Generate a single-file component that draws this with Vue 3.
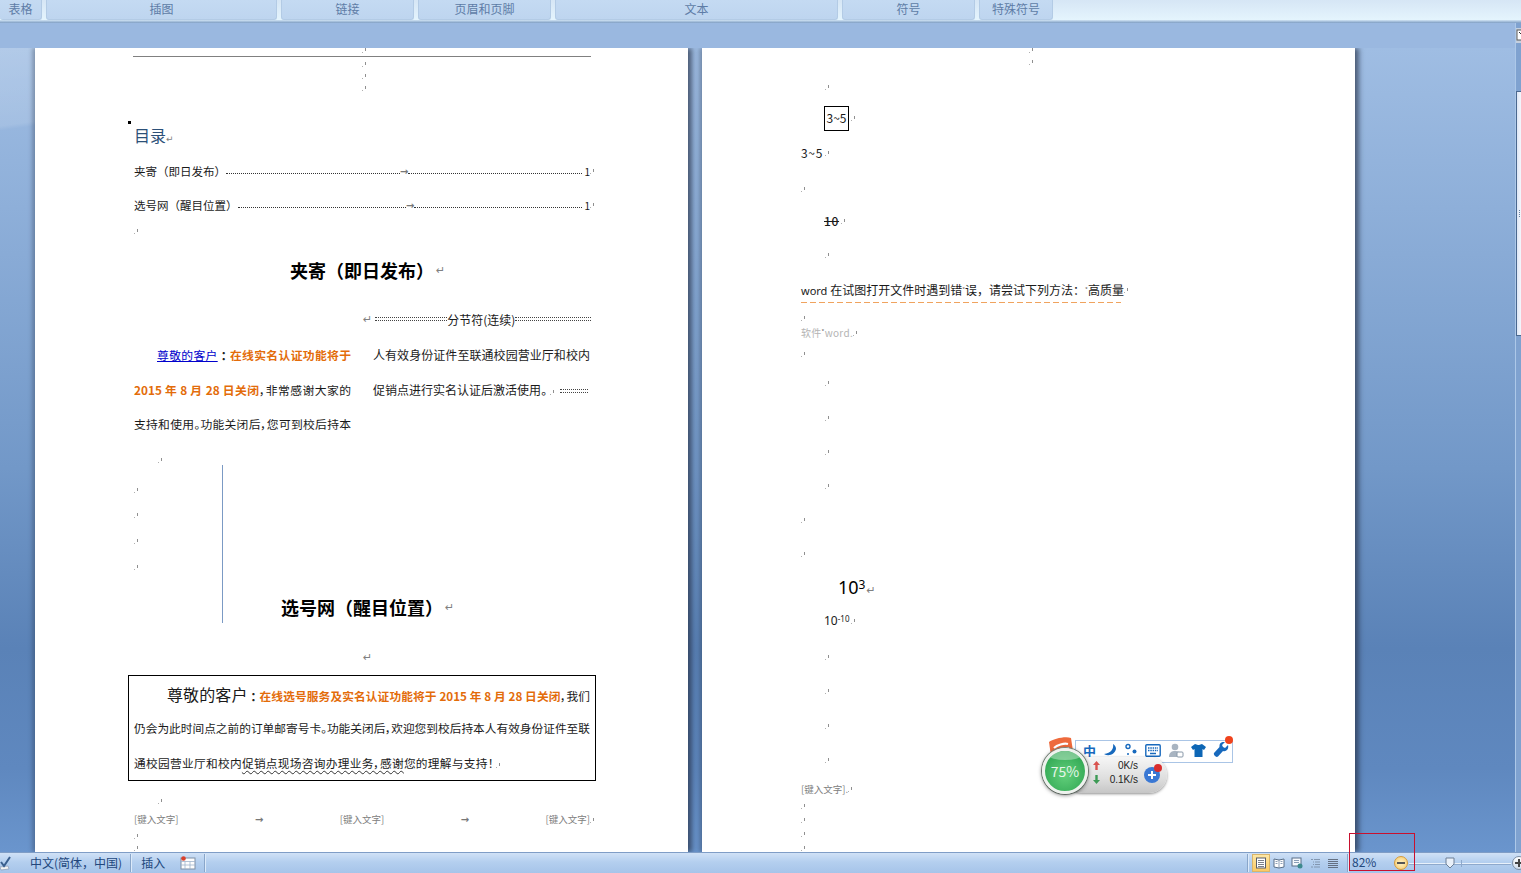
<script setup>
const tabs = [
  { t: '表格', w: 42 }, { t: '插图', w: 231 }, { t: '链接', w: 133 }, { t: '页眉和页脚', w: 133 },
  { t: '文本', w: 283 }, { t: '符号', w: 133 }, { t: '特殊符号', w: 74 }
]
const raw = [
  [50, 228, 'mark'], [62, 228, 'mark'], [87, 24, 'mark'], [118.5, 23, 'box'], [153, 0, 'range'], [189, 0, 'mark'],
  [221, 23, 'strike'], [255, 24, 'mark'], [290, 0, 'word'], [302, -1, 'dash'], [318, 0, 'mark'], [333, 0, 'soft'],
  [354, 0, 'mark'], [383, 24, 'mark'], [418, 24, 'mark'], [452, 24, 'mark'], [486, 24, 'mark'], [520, 0, 'mark'],
  [554, 0, 'mark'], [587, 37, 'pow'], [621, 23, 'neg'], [657, 24, 'mark'], [691, 24, 'mark'], [726, 24, 'mark'],
  [760, 24, 'mark'], [789, 0, 'hdr'], [806, 0, 'mark'], [820, 0, 'mark'], [834, 0, 'mark'], [848, 0, 'mark']
]
const rows = raw.map((r, i) => ({
  kind: r[2],
  indent: r[1],
  gap: i + 1 < raw.length ? raw[i + 1][0] - r[0] : 16
}))
const views = [0, 1, 2, 3, 4]
</script>

<template>
  <div class="app">
    <header class="ribbon">
      <div v-for="tab in tabs" :key="tab.t" class="tab" :style="{ width: tab.w + 'px' }">{{ tab.t }}</div>
    </header>

    <div class="middle">
      <div class="main">
        <div class="ruler"></div>
        <div class="workspace">
          <article class="page left">
            <div class="m-row h4 center-mark"><i class="mk"></i></div>
            <div class="rule"></div>
            <div class="m-row h8 center-mark"><i class="mk"></i></div>
            <div class="m-row h16 center-mark"><i class="mk"></i></div>
            <div class="m-row h8 center-mark"><i class="mk"></i></div>

            <div class="toc-head"><b class="anchor"></b>目录<span class="ret">↵</span></div>
            <div class="toc first">
              <span>夹寄（即日发布）</span><em class="lead"></em><span class="tab-arrow">→</span><em class="lead r1"></em><span class="num">1</span><i class="mk"></i>
            </div>
            <div class="toc">
              <span>选号网（醒目位置）</span><em class="lead"></em><span class="tab-arrow">→</span><em class="lead r2"></em><span class="num">1</span><i class="mk"></i>
            </div>
            <div class="m-row h19"><i class="mk"></i></div>

            <h2 class="title t1">夹寄（即日发布）<span class="ret">↵</span></h2>

            <div class="section">
              <span class="ret">↵</span>
              <em class="dbl d1"></em><span>分节符(连续)</span><em class="dbl d2"></em>
            </div>

            <div class="cols">
              <div class="col">
                <p class="line just first-line"><a class="link">尊敬的客户</a><b class="dark">：</b><b class="org">在线实名认证功能将于</b></p>
                <p class="line just"><b class="org">2015 年 8 月 28 日关闭</b>，非常感谢大家的</p>
                <p class="line just">支持和使用。功能关闭后，您可到校后持本</p>
              </div>
              <div class="col">
                <p class="line just">人有效身份证件至联通校园营业厅和校内</p>
                <p class="line">促销点进行实名认证后激活使用。<i class="mk ml3"></i><em class="dbl d3"></em></p>
              </div>
            </div>

            <div class="drawing">
              <span class="v-line"></span>
              <div class="m-row h38 in26"><i class="mk"></i></div>
              <div class="m-row h22"><i class="mk"></i></div>
              <div class="m-row h28"><i class="mk"></i></div>
              <div class="m-row h24"><i class="mk"></i></div>
              <div class="m-row h28"><i class="mk"></i></div>
              <div class="spacer2"></div>
              <h2 class="title t2">选号网（醒目位置）<span class="ret">↵</span></h2>
              <div class="m-row h42 pad6 in228"><span class="ret">↵</span></div>
            </div>

            <div class="box">
              <p class="bline just box-first"><span class="big">尊敬的客户</span><b class="dark">：</b><b class="org">在线选号服务及实名认证功能将于 2015 年 8 月 28 日关闭</b>，我们</p>
              <p class="bline just b2">仍会为此时间点之前的订单邮寄号卡。功能关闭后，欢迎您到校后持本人有效身份证件至联</p>
              <p class="bline b3">通校园营业厅和校内<span class="wavy">促销点现场咨询办理业务，感谢</span>您的理解与支持！<i class="mk ml2"></i></p>
            </div>

            <div class="m-row h20 mt10 in26"><i class="mk"></i></div>
            <div class="hdr-row">
              <span>[键入文字]</span><span class="tab-arrow">→</span>
              <span>[键入文字]</span><span class="tab-arrow">→</span>
              <span>[键入文字]<i class="mk"></i></span>
            </div>
            <div class="m-row h18"><i class="mk"></i></div>
            <div class="m-row h6"><i class="mk"></i></div>
          </article>

          <article class="page right">
            <div class="first-gap"></div>
            <div v-for="(r, i) in rows" :key="i" class="r-row" :style="{ height: r.gap + 'px', paddingLeft: r.indent + 'px' }">
              <div class="cell">
                <i v-if="r.kind === 'mark'" class="mk"></i>
                <template v-else-if="r.kind === 'box'"><span class="range-box">3~5</span><i class="mk ml2"></i></template>
                <template v-else-if="r.kind === 'range'"><span class="t12 wide">3~5</span><i class="mk ml2"></i></template>
                <template v-else-if="r.kind === 'strike'"><s class="t12 wide b">10</s><i class="mk ml2"></i></template>
                <template v-else-if="r.kind === 'word'"><span class="t12 word"><span class="latin">word </span>在试图打开文件时遇到错<sup class="tick">*</sup>误，请尝试下列方法：<sup class="tick">*</sup>高质量</span><i class="mk"></i></template>
                <span v-else-if="r.kind === 'dash'" class="dash"></span>
                <template v-else-if="r.kind === 'soft'"><span class="soft">软件<sup class="tick">*</sup>word.</span><i class="mk"></i></template>
                <span v-else-if="r.kind === 'pow'" class="pow">10<sup>3</sup><span class="ret">↵</span></span>
                <template v-else-if="r.kind === 'neg'"><span class="neg">10<sup>-10</sup></span><i class="mk ml2"></i></template>
                <template v-else-if="r.kind === 'hdr'"><span class="hdr">[键入文字].</span><i class="mk"></i></template>
              </div>
            </div>
          </article>
        </div>
      </div>

      <aside class="scroll">
        <div class="scroll-btn">
          <svg width="6" height="14" viewBox="0 0 6 14"><rect x="1" y="2" width="8" height="10" fill="#fff" stroke="#5a5a5a"/><path d="M3 4l3 3" stroke="#333"/></svg>
        </div>
        <div class="thumb"><span class="grip"></span></div>
      </aside>
    </div>

    <footer class="status">
      <svg class="check" width="14" height="16" viewBox="0 0 14 16">
        <path d="M1 12l8-1 1 3-8 1z" fill="#f4f4f4" stroke="#8b9bb4" stroke-width=".7"/>
        <path d="M2 7l3 4 6-9" fill="none" stroke="#3a5f8e" stroke-width="2"/>
      </svg>
      <span class="st-lang">中文(简体，中国)</span>
      <span class="sep sp1"></span>
      <span class="st-ins">插入</span>
      <svg class="st-ico" width="16" height="14" viewBox="0 0 16 14">
        <rect x="1" y="2" width="14" height="11" fill="#fdfdfd" stroke="#7f8fa5"/>
        <path d="M1 5.500h14M5 5.500v7.500M10 5.500v7.500M1 9h14" stroke="#9fb4cc" stroke-width=".8"/>
        <circle cx="3.500" cy="2.500" r="2.300" fill="#d8402c"/>
      </svg>
      <span class="sep sp1"></span>
      <div class="st-right">
        <span class="sep"></span>
        <div class="views">
          <span v-for="v in views" :key="v" class="view" :class="{ active: v === 0 }">
            <svg width="12" height="12" viewBox="0 0 12 12">
              <template v-if="v === 0"><rect x="1.500" y="1" width="9" height="10" fill="#fff" stroke="#5a5f6a"/><path d="M3 3.500h6M3 5.500h6M3 7.500h6M3 9.500h6" stroke="#5a5f6a" stroke-width=".8"/></template>
              <template v-else-if="v === 1"><path d="M1 2l5 1 5-1v8l-5 1-5-1z" fill="#fff" stroke="#5a6f88"/><path d="M6 3v8M2.500 4.500h2M2.500 6.500h2M7.500 4.500h2M7.500 6.500h2" stroke="#6f86a5" stroke-width=".8"/></template>
              <template v-else-if="v === 2"><rect x="1" y="1" width="9" height="8" fill="#f6f9fd" stroke="#5a6f88"/><path d="M3 3.500h5M3 5.500h5" stroke="#6f86a5" stroke-width=".8"/><circle cx="9" cy="9" r="2.500" fill="#3d8a8e"/></template>
              <template v-else-if="v === 3"><path d="M2 2.500h2M5 2.500h6M4 5h1M6 5h5M4 7.500h1M6 7.500h5M2 10h2M5 10h6" stroke="#7d90a8" stroke-width=".9"/></template>
              <template v-else><path d="M1 2.500h10M1 4.500h10M1 6.500h10M1 8.500h10M1 10.500h10" stroke="#5a6475" stroke-width=".9"/></template>
            </svg>
          </span>
        </div>
        <span class="sep"></span>
        <span class="zoom-val">82%</span>
        <span class="round minus"><span class="minus-bar"></span></span>
        <div class="slider">
          <span class="tick-mark"></span>
          <svg class="knob" width="10" height="12" viewBox="0 0 10 12"><path d="M1 1h8v6l-4 4-4-4z" fill="#e9f0f9" stroke="#6d7f96"/></svg>
        </div>
        <span class="round plus"></span>
      </div>
      <span class="red-frame"></span>
    </footer>

    <div class="widget">
      <svg class="logo" width="28" height="22" viewBox="0 0 28 22">
        <path d="M2 6C6 3 18 0 24 2l2 13-22 5z" fill="#ee6a3c"/>
        <path d="M7 12c3-3 10-5 14-4M9 15c4-2 8-3 13-3" stroke="#fff" stroke-width="2.200" fill="none"/>
      </svg>
      <div class="bar">
        <span class="zh">中</span>
        <svg width="14" height="14" viewBox="0 0 14 14"><path d="M10 1c1 5-2 9-9 10 5 3 11 0 12-5 0-2-1-4-3-5z" fill="#1769bd"/></svg>
        <svg width="14" height="14" viewBox="0 0 14 14"><circle cx="4" cy="3.500" r="2" fill="none" stroke="#1769bd" stroke-width="1.400"/><circle cx="10.500" cy="8.500" r="2" fill="#1769bd"/><circle cx="4" cy="11" r="1" fill="#1769bd"/></svg>
        <svg width="16" height="13" viewBox="0 0 16 13"><rect x=".8" y=".8" width="14.400" height="11.400" rx="1" fill="#fff" stroke="#1769bd" stroke-width="1.400"/><path d="M3 4h10M3 6.500h10" stroke="#1769bd" stroke-width="1.500" stroke-dasharray="1.500 .8"/><path d="M5 9.500h6" stroke="#1769bd" stroke-width="1.500"/></svg>
        <svg width="16" height="15" viewBox="0 0 16 15"><circle cx="7" cy="4" r="3.300" fill="#a8b4c1"/><path d="M1 14c0-5 3-6 6-6s6 1 6 6z" fill="#a8b4c1"/><rect x="9" y="9" width="6" height="5" rx="1" fill="#fff" stroke="#8898a8"/></svg>
        <svg width="15" height="14" viewBox="0 0 15 14"><path d="M4 1l3 1h1l3-1 4 3-2 3-1.500-1v8H3.500V6L2 7 0 4z" fill="#0d66b5"/></svg>
        <svg width="16" height="16" viewBox="0 0 16 16"><path d="M15 3l-3 3-2-1-1-2 3-3c-3-.6-6 1-5.500 5L1 11c-1 2 2 5 4 3.500l5-5.500c4 1 6-2.500 5-6z" fill="#1769bd"/></svg>
        <span class="hot"></span>
      </div>
      <div class="pill">
        <div class="rates">
          <div class="rate"><svg width="7" height="9" viewBox="0 0 7 9"><path d="M3.500 0L7 4H4.700v5H2.300V4H0z" fill="#d9534f"/></svg><span class="val">0K/s</span></div>
          <div class="rate"><svg width="7" height="9" viewBox="0 0 7 9"><path d="M3.500 9L7 5H4.700V0H2.300v5H0z" fill="#3d9a55"/></svg><span class="val">0.1K/s</span></div>
        </div>
        <span class="add"><span class="add-dot"></span></span>
      </div>
      <div class="ball"><span class="gloss"></span>75%</div>
    </div>
  </div>
</template>

<style>
html, body { margin: 0; overflow: hidden; }
</style>

<style scoped>
.app {
  position: relative;
  width: 1521px;
  height: 873px;
  overflow: hidden;
  display: flex;
  flex-direction: column;
  font-family: "Noto Sans CJK SC", "Noto Sans", sans-serif;
  font-size: 12px;
  color: #1a1a1a;
}
p, h2 { margin: 0; }
em { font-style: normal; }

.ribbon {
  height: 23px;
  flex: none;
  display: flex;
  gap: 4px;
  box-sizing: border-box;
  padding-bottom: 3px;
  background: linear-gradient(#d6e6f5, #e4f4fd 85%, #bcd2e8 90%, #7e9dc2);
}
.tab {
  height: 20px;
  box-sizing: border-box;
  border: 1px solid #b3cbe5;
  border-top: 0;
  border-radius: 0 0 3px 3px;
  background: linear-gradient(#c4daf2, #bed5ef);
  color: #5e7ca6;
  font-size: 12px;
  line-height: 18px;
  text-align: center;
  flex: none;
}
.tab:first-child { border-left: 0; }

.middle { flex: 1; min-height: 0; display: flex; }
.main { flex: 1; min-width: 0; display: flex; flex-direction: column; }
.ruler { height: 25px; flex: none; background: #9ab8e0; }
.workspace {
  flex: 1;
  min-height: 0;
  display: flex;
  gap: 14px;
  padding-left: 35px;
  overflow: hidden;
  background:
    linear-gradient(172deg, rgba(255,255,255,.2) 0, rgba(255,255,255,.12) 68%, rgba(255,255,255,0) 72%) 0 0 / 35px 110px no-repeat,
    linear-gradient(#9fbde3 0, #8eafd9 160px, #7298c8 420px, #5a82b7 600px, #5f88bf 720px, #6a95cd 804px);
}
.page {
  width: 653px;
  flex: none;
  background: #fff;
  box-sizing: border-box;
  overflow: hidden;
  box-shadow: 4px 0 5px rgba(35, 45, 65, .65), -3px 0 4px rgba(35, 45, 65, .3);
}
.page.left { padding: 0 61px 0 99px; }
.page.right { padding-left: 99px; }

/* paragraph marks */
.mk {
  display: inline-block;
  flex: none;
  width: 4px;
  height: 5px;
  background:
    linear-gradient(#8f8f8f, #8f8f8f) right top / 1px 3px no-repeat,
    linear-gradient(#b0b0b0, #b0b0b0) left bottom / 1px 1px no-repeat;
}
.ml2 { margin-left: 2px; }
.ml3 { margin-left: 3px; }
.ret { color: #808080; font-family: "DejaVu Sans", sans-serif; font-size: 11px; font-weight: 400; margin-left: 1px; }

.m-row { display: flex; align-items: center; box-sizing: border-box; }
.center-mark { padding-left: 228px; }
.h4 { height: 4px; }
.h6 { height: 6px; }
.h8 { height: 8px; }
.h16 { height: 16px; }
.h18 { height: 18px; }
.h19 { height: 19px; }
.h20 { height: 20px; }
.h22 { height: 22px; }
.h24 { height: 24px; }
.h28 { height: 28px; }
.h38 { height: 38px; }
.h42 { height: 42px; }
.pad6 { padding-top: 6px; }
.mt10 { margin-top: 10px; }
.in26 { padding-left: 24px; }
.in228 { padding-left: 228px; }
.rule { height: 1px; background: #808080; margin: 4px 0 3px -1px; width: 458px; }

.toc-head {
  position: relative;
  margin-top: 28px;
  height: 30px;
  line-height: 30px;
  font-size: 16px;
  color: #2c5078;
}
.toc-head .ret { font-size: 9px; margin-left: 0; }
.anchor { position: absolute; left: -6px; top: 1px; width: 3px; height: 3px; background: #000; }
.toc {
  height: 34px;
  display: flex;
  align-items: center;
  font-size: 11.500px;
  width: 460px;
}
.toc.first { margin-top: 4px; }
.lead { flex: 1; height: 4px; border-bottom: 1px dotted #333; }
.lead.r1 { flex: none; width: 174px; }
.lead.r2 { flex: none; width: 168px; }
.tab-arrow { color: #777; font-family: "DejaVu Sans", sans-serif; font-size: 10px; font-weight: 700; }
.num { margin-left: 2px; font-size: 10px; }

.title {
  font-size: 18px;
  font-weight: 700;
  color: #000;
  white-space: nowrap;
  display: flex;
  align-items: center;
  box-sizing: border-box;
  padding-bottom: 2px;
}
.title .ret { margin-left: 2px; }
.t1 { height: 60px; padding-left: 156px; }
.t2 { height: 50px; padding-left: 147px; }
.spacer2 { height: 2px; }

.section { height: 38px; box-sizing: border-box; padding: 0 0 2px 228px; display: flex; align-items: center; white-space: nowrap; }
.section .ret { margin-right: 3px; }
.dbl {
  display: inline-block;
  height: 2px;
  border-top: 1px dotted #444;
  border-bottom: 1px dotted #444;
  flex: none;
}
.d1 { width: 72px; }
.d2 { width: 76px; }
.d3 { width: 28px; margin-left: 6px; vertical-align: 2px; }

.cols { display: grid; grid-template-columns: 217px 217px; column-gap: 22px; width: 458px; font-feature-settings: "palt"; margin-top: -1px; }
.col:first-child { font-size: 11.800px; }
.line { height: 34px; line-height: 34px; white-space: nowrap; }
.line:first-child { margin-bottom: 1px; }
.just { text-align: justify; text-align-last: justify; white-space: normal; }
.first-line { padding-left: 23px; }
.link { color: #0000cc; text-decoration: underline; }
.org { color: #e36c0a; font-weight: 700; }
.dark { font-weight: 700; color: #222; margin: 0 3px; }

.drawing { position: relative; }
.v-line { position: absolute; left: 88px; top: 24px; height: 158px; width: 1px; background: #7b9ac4; }

.box {
  box-sizing: border-box;
  width: 468px;
  height: 106px;
  margin-left: -6px;
  padding: 2px 5px 0;
  border: 1px solid #000;
  font-size: 11.700px;
  font-feature-settings: "palt";
}
.bline { height: 33px; line-height: 33px; white-space: nowrap; }
.box-first { padding-left: 33px; height: 34px; line-height: 32px; }
.b2 { margin-top: -1px; white-space: normal; }
.b3 { margin-top: 2px; letter-spacing: .3px; }
.big { font-size: 16px; }
.wavy { text-decoration: underline wavy #333 1px; text-underline-offset: 2px; }

.hdr-row {
  height: 16px;
  display: flex;
  justify-content: space-between;
  align-items: center;
  width: 460px;
  font-size: 9.500px;
  color: #808080;
}

.first-gap { height: 0; margin-top: -6px; }
.r-row { box-sizing: border-box; }
.cell { height: 16px; display: flex; align-items: center; white-space: nowrap; }
.t12 { font-size: 12px; padding-bottom: 2px; }
.wide { letter-spacing: .7px; }
.b { font-weight: 500; }
.range-box {
  box-sizing: border-box;
  width: 25px;
  height: 25px;
  border: 1px solid #000;
  line-height: 21px;
  text-align: center;
  font-size: 12px;
  flex: none;
}
.latin { font-family: "Noto Sans", sans-serif; font-size: 11px; }
.tick { font-size: 6px; vertical-align: 3px; line-height: 0; color: #666; }
.dash { display: block; width: 320px; height: 1px; background: repeating-linear-gradient(90deg, #f0a35e 0 6px, transparent 6px 9px); }
.soft { font-size: 10px; letter-spacing: .3px; color: #b4b4b4; padding-bottom: 2px; }
.pow { font-size: 18px; color: #000; font-family: "Noto Sans", sans-serif; line-height: 1; }
.pow sup { font-size: 12px; vertical-align: 5px; line-height: 0; }
.neg { font-size: 12px; font-family: "Noto Sans", sans-serif; padding-bottom: 2px; }
.neg sup { font-size: 8px; vertical-align: 3px; line-height: 0; }
.hdr { font-size: 9.500px; color: #808080; }

.scroll {
  width: 6px;
  flex: none;
  position: relative;
  box-sizing: border-box;
  background: #7fa2d0;
  border-left: 1px solid #adc8e8;
}
.scroll-btn { margin-top: 5px; height: 15px; background: #c5d0df; overflow: hidden; }
.thumb {
  margin-top: 48px;
  height: 245px;
  box-sizing: border-box;
  background: linear-gradient(90deg, #dde6f5, #f4f7fd);
  border: 1px solid #4a6890;
  border-right: 0;
  display: flex;
  align-items: center;
  justify-content: center;
}
.grip { width: 1px; height: 7px; background: repeating-linear-gradient(#66809f 0 1px, transparent 1px 2px); }

.status {
  position: relative;
  height: 21px;
  flex: none;
  box-sizing: border-box;
  display: flex;
  align-items: center;
  border-top: 1px solid #7f9dc6;
  background: linear-gradient(#d0e1f6, #b4cfef 45%, #a6c4e9);
  color: #22477c;
  overflow: visible;
}
.check { position: absolute; left: -1px; top: 2px; }
.st-lang { margin-left: 30px; font-size: 12px; white-space: nowrap; padding-bottom: 1px; }
.st-ins { margin-left: 9px; font-size: 12px; padding-bottom: 1px; }
.st-ico { margin-left: 15px; }
.sep { width: 1px; height: 18px; background: #89a6ca; border-right: 1px solid #dceafa; flex: none; }
.sp1 { margin-left: 8px; }
.st-right { margin-left: auto; display: flex; align-items: center; margin-right: -5px; }
.views { display: flex; padding: 0 5px 0 3px; }
.view { width: 18px; height: 18px; display: flex; align-items: center; justify-content: center; margin-right: 0; }
.view.active { background: linear-gradient(#fde7a5, #fbc964); border: 1px solid #d9b56a; box-sizing: border-box; }
.zoom-val { margin-left: 3px; width: 42px; font-size: 12px; padding-bottom: 3px; }
.round {
  width: 14px;
  height: 14px;
  border-radius: 50%;
  box-sizing: border-box;
  display: flex;
  align-items: center;
  justify-content: center;
  flex: none;
  border: 1px solid #7c8da3;
  background: linear-gradient(#fff, #cfdbea);
}
.minus { border-color: #d49a3c; background: radial-gradient(#fff4c8, #f5c867); }
.minus-bar { width: 8px; height: 2px; background: #555; }
.slider { position: relative; width: 102px; height: 1px; background: #e8f1fb; box-shadow: 0 1px 0 #8ea9cc; margin: 0 1px; }
.tick-mark { position: absolute; left: 52px; top: -3px; width: 1px; height: 7px; background: #8ea9cc; }
.knob { position: absolute; left: 36px; top: -6px; }
.plus {
  background:
    linear-gradient(#444, #444) center / 8px 2px no-repeat,
    linear-gradient(#444, #444) center / 2px 8px no-repeat,
    linear-gradient(#fff, #cfdbea);
}
.red-frame {
  position: absolute;
  left: 1349px;
  top: -20px;
  width: 66px;
  height: 38px;
  border: 1px solid #c8102e;
  box-sizing: border-box;
}

.widget { position: absolute; left: 1040px; top: 735px; width: 195px; height: 65px; }
.logo { position: absolute; left: 7px; top: 1px; }
.bar {
  position: absolute;
  left: 35px;
  top: 5px;
  width: 158px;
  height: 23px;
  box-sizing: border-box;
  padding: 0 3px 3px 7px;
  display: flex;
  align-items: center;
  justify-content: space-between;
  background: #fff;
  border: 1px solid #aac5e6;
}
.zh { color: #1769bd; font-weight: 700; font-size: 13px; line-height: 1; }
.hot { position: absolute; right: -1px; top: -5px; width: 8px; height: 8px; border-radius: 50%; background: #f0431d; }
.pill {
  position: absolute;
  left: 25px;
  top: 22px;
  width: 102px;
  height: 36px;
  box-sizing: border-box;
  padding: 0 7px 5px 28px;
  display: flex;
  align-items: center;
  border-radius: 18px;
  background: linear-gradient(#f6f6f6, #dedede 60%, #c6c6c6);
  box-shadow: 0 1px 3px rgba(0, 0, 0, .45);
}
.rates { flex: 1; margin-right: 6px; }
.rate { display: flex; justify-content: space-between; align-items: center; height: 14px; font-size: 10px; color: #222; font-family: "Liberation Sans", sans-serif; }
.add {
  position: relative;
  width: 16px;
  height: 16px;
  flex: none;
  margin-top: 5px;
  border-radius: 50%;
  background:
    linear-gradient(#fff, #fff) center / 8px 2px no-repeat,
    linear-gradient(#fff, #fff) center / 2px 8px no-repeat,
    #3a78d4;
}
.add-dot { position: absolute; right: -2px; top: -3px; width: 8px; height: 8px; border-radius: 50%; background: #d92d2d; }
.ball {
  position: absolute;
  left: 2px;
  top: 13px;
  width: 46px;
  height: 46px;
  box-sizing: border-box;
  border-radius: 50%;
  border: 3px solid #eef2ee;
  background: radial-gradient(circle at 50% 60%, #62cf7b, #33a955 75%, #1f8b42);
  box-shadow: 0 1px 4px rgba(0, 0, 0, .6), 0 0 0 1px #8b9a8f;
  color: #e6f6e9;
  font-size: 14px;
  line-height: 40px;
  text-align: center;
  overflow: hidden;
}
.gloss { position: absolute; left: 4px; right: 4px; top: 0; height: 9px; border-radius: 50%; background: rgba(255, 255, 255, .35); }
</style>
